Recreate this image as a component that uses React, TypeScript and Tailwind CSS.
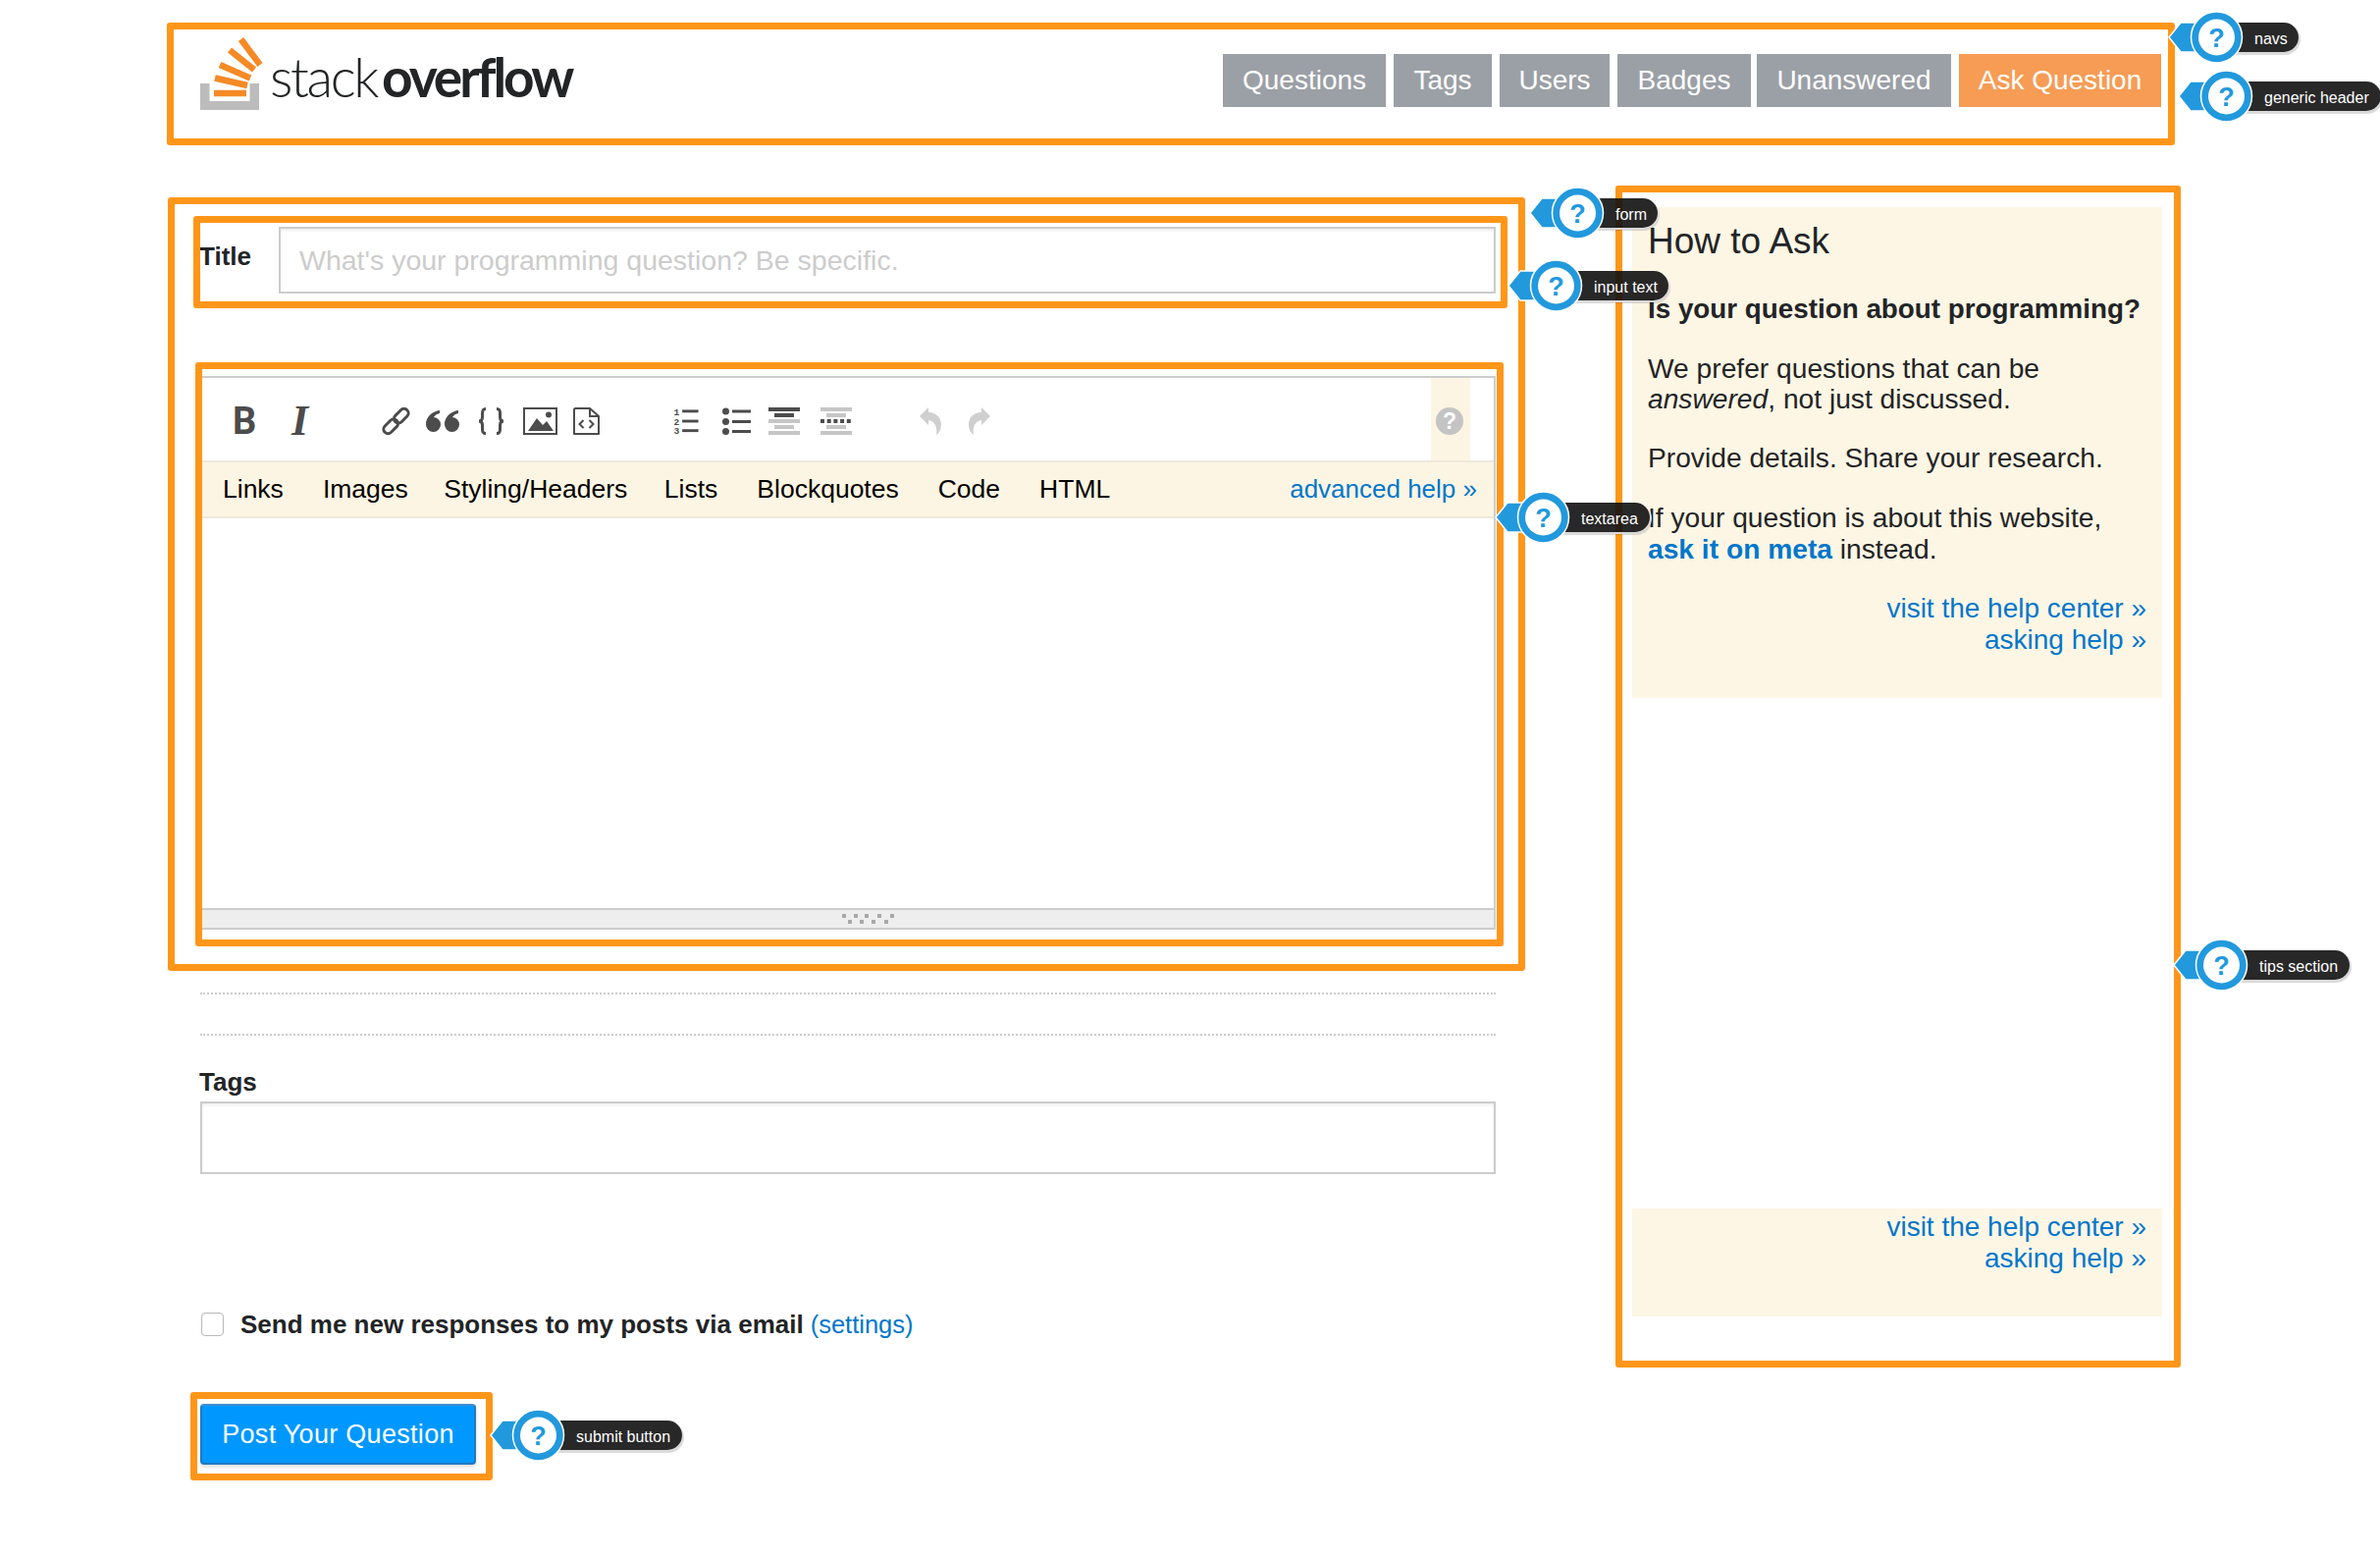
const NAV = [
  { label: "Questions", cls: "w-[166px] bg-[#9ba0a6]" },
  { label: "Tags", cls: "ml-[8px] w-[100px] bg-[#9ba0a6]" },
  { label: "Users", cls: "ml-[8px] w-[112px] bg-[#9ba0a6]" },
  { label: "Badges", cls: "ml-[8px] w-[136px] bg-[#9ba0a6]" },
  { label: "Unanswered", cls: "ml-[6px] w-[198px] bg-[#9ba0a6]" },
  { label: "Ask Question", cls: "ml-[8px] w-[206px] bg-[#f69c55]" },
];

const HELP_TABS = [
  { label: "Links", cls: "" },
  { label: "Images", cls: "ml-[40px]" },
  { label: "Styling/Headers", cls: "ml-[36.5px]" },
  { label: "Lists", cls: "ml-[37.5px]" },
  { label: "Blockquotes", cls: "ml-[40px]" },
  { label: "Code", cls: "ml-[40px]" },
  { label: "HTML", cls: "ml-[40px]" },
];

function Logo() {
  return (
    <div className="flex items-start">
      <svg width="64" height="74" viewBox="0 0 64 74" className="ml-px shrink-0">
        <path d="M0 47H9.5V65H50.5V47H60V74H0Z" fill="#bcbcbc" />
        <g stroke="#f58a26" strokeWidth="6.5">
          <path d="M14 57H47" />
          <path d="M15 41.5L48 49" />
          <path d="M20 28L51 41.5" />
          <path d="M30 13L55 33" />
          <path d="M41.5 2L61 28" />
        </g>
      </svg>
      <div className="ml-[7px] mt-[7px] flex text-[55px] leading-[66px] text-[#222426] font-['Lato',sans-serif]">
        <span className="font-light tracking-[-2.4px]">stack</span>
        <span className="ml-[5px] font-bold tracking-[-3px]">overflow</span>
      </div>
    </div>
  );
}

function Toolbar() {
  return (
    <div className="flex h-[84px] items-center pl-[31px] pt-[4px] text-[#4c4c4c]">
      <span className="w-[24px] text-[38px] leading-[28px] font-bold font-['Roboto',sans-serif]">B</span>
      <span className="ml-[36px] w-[30px] text-[44px] leading-[28px] font-bold italic font-['Liberation_Serif',serif]">I</span>

      {/* link */}
      <svg width="29" height="28" viewBox="0 0 29 28" className="ml-[62px]" fill="none" stroke="currentColor" strokeWidth="3">
        <g transform="rotate(-45 14.5 14)">
          <rect x="-1.5" y="9.5" width="17" height="9" rx="4.5" />
          <rect x="13.5" y="9.5" width="17" height="9" rx="4.5" />
        </g>
      </svg>
      {/* quote */}
      <svg width="34" height="22" viewBox="0 0 34 22" className="ml-[16px]" fill="currentColor">
        <circle cx="7.5" cy="14.5" r="7.5" />
        <path d="M0 14C0 7 6 1 14 0V3C9.5 4 7.5 7 7.5 9L1 13Z" />
        <circle cx="26.5" cy="14.5" r="7.5" />
        <path d="M19 14C19 7 25 1 33 0V3C28.5 4 26.5 7 26.5 9L20 13Z" />
      </svg>
      {/* braces */}
      <svg width="27" height="28" viewBox="0 0 27 28" className="ml-[19px]" fill="none" stroke="currentColor" strokeWidth="3">
        <path d="M8 1.5C5 1.5 4.5 3 4.5 6V10C4.5 12.5 3 14 1 14C3 14 4.5 15.5 4.5 18V22C4.5 25 5 26.5 8 26.5" />
        <path d="M19 1.5C22 1.5 22.5 3 22.5 6V10C22.5 12.5 24 14 26 14C24 14 22.5 15.5 22.5 18V22C22.5 25 22 26.5 19 26.5" />
      </svg>
      {/* image */}
      <svg width="35" height="28" viewBox="0 0 35 28" className="ml-[19px]">
        <rect x="1" y="1" width="33" height="26" fill="none" stroke="currentColor" strokeWidth="2" />
        <path d="M5 24L14 11L20 18L24 14L31 24Z" fill="currentColor" />
        <circle cx="26" cy="7.5" r="3" fill="currentColor" />
      </svg>
      {/* html */}
      <svg width="27" height="28" viewBox="0 0 27 28" className="ml-[16px]" fill="none" stroke="currentColor" strokeWidth="2">
        <path d="M2 1H17L26 9V27H1V2Z" strokeLinejoin="round" />
        <path d="M17 1V9H26" />
        <path d="M10.5 13L6.5 17L10.5 21M16.5 13L20.5 17L16.5 21" />
      </svg>

      {/* ordered list */}
      <svg width="26" height="28" viewBox="0 0 26 29" className="ml-[75px] overflow-visible" fill="currentColor">
        <text x="0" y="8.5" fontSize="10" fontWeight="700" fontFamily="Liberation Mono, monospace">1</text>
        <text x="0" y="18.5" fontSize="10" fontWeight="700" fontFamily="Liberation Mono, monospace">2</text>
        <text x="0" y="28" fontSize="10" fontWeight="700" fontFamily="Liberation Mono, monospace">3</text>
        <rect x="9" y="2.5" width="17" height="3" />
        <rect x="9" y="13" width="17" height="3" />
        <rect x="9" y="23" width="17" height="3" />
      </svg>
      {/* unordered list */}
      <svg width="29" height="28" viewBox="0 0 29 28" className="ml-[24px]" fill="currentColor">
        <circle cx="3.5" cy="4" r="3.5" />
        <circle cx="3.5" cy="14.5" r="3.5" />
        <circle cx="3.5" cy="24.5" r="3.5" />
        <rect x="10" y="2.5" width="19" height="3" />
        <rect x="10" y="13" width="19" height="3" />
        <rect x="10" y="23" width="19" height="3" />
      </svg>
      {/* heading */}
      <svg width="32" height="28" viewBox="0 0 32 28" className="ml-[18px]">
        <rect width="32" height="4" fill="#4c4c4c" />
        <rect x="6" y="6" width="20" height="4" fill="#4c4c4c" />
        <rect y="12" width="32" height="4" fill="#c6c6c6" />
        <rect x="6" y="18" width="20" height="4" fill="#c6c6c6" />
        <rect y="24" width="32" height="4" fill="#c6c6c6" />
      </svg>
      {/* horizontal rule */}
      <svg width="32" height="28" viewBox="0 0 32 28" className="ml-[21px]">
        <rect width="32" height="4" fill="#c6c6c6" />
        <rect x="6" y="6" width="20" height="4" fill="#c6c6c6" />
        <path d="M0 14H32" stroke="#4c4c4c" strokeWidth="4" strokeDasharray="4 2.7" />
        <rect x="6" y="18" width="20" height="4" fill="#c6c6c6" />
        <rect y="24" width="32" height="4" fill="#c6c6c6" />
      </svg>

      {/* undo / redo */}
      <svg width="22" height="28" viewBox="0 0 22 28" className="ml-[69px]" fill="#cfcfcf">
        <path d="M0 9L9 0V18Z" />
        <path d="M9 5C17 5 22 11 22 17C22 22 20 26 17 28C18 23 17 14 9 13Z" />
      </svg>
      <svg width="22" height="28" viewBox="0 0 22 28" className="ml-[28px]" fill="#cfcfcf">
        <path d="M22 9L13 0V18Z" />
        <path d="M13 5C5 5 0 11 0 17C0 22 2 26 5 28C4 23 5 14 13 13Z" />
      </svg>

      {/* help */}
      <div className="ml-auto mr-[24px] -mt-[4px] flex h-[84px] w-[40px] items-center justify-center bg-[#fdf5e3] pt-[4px]">
        <svg width="28" height="28" viewBox="0 0 28 28" className="-ml-[3px]">
          <circle cx="14" cy="14" r="14" fill="#c4c4c4" />
          <text x="14" y="22" textAnchor="middle" fontSize="23" fontWeight="700" fill="#fff" fontFamily="Liberation Sans, sans-serif">?</text>
        </svg>
      </div>
    </div>
  );
}

function Editor() {
  return (
    <div className="mt-[84px] ml-px flex w-[1320px] flex-col border-x-2 border-t-2 border-[#ccc]">
      <Toolbar />
      <div className="flex h-[59px] items-center border-y-2 border-[#efe8dc] bg-[#fdf5e3] pl-[21px] pr-[17px] text-[26.5px] text-black">
        {HELP_TABS.map((t) => (
          <span key={t.label} className={t.cls}>
            {t.label}
          </span>
        ))}
        <a className="ml-auto text-[26px] text-[#0077cc]">advanced help »</a>
      </div>
      <div className="h-[397px]" />
      <div className="flex h-[22px] items-center justify-center border-y-2 border-[#ccc] bg-[#eee]">
        <svg width="54" height="10" viewBox="0 0 54 10" className="ml-[42px]" fill="#a9a9a9">
          <rect x="0" y="0" width="4" height="4" />
          <rect x="12" y="0" width="4" height="4" />
          <rect x="23" y="0" width="4" height="4" />
          <rect x="36" y="0" width="4" height="4" />
          <rect x="49" y="0" width="4" height="4" />
          <rect x="6" y="6" width="4" height="4" />
          <rect x="18" y="6" width="4" height="4" />
          <rect x="30" y="6" width="4" height="4" />
          <rect x="43" y="6" width="4" height="4" />
        </svg>
      </div>
    </div>
  );
}

function Form() {
  return (
    <div className="w-[1321px] pt-[20px] text-[#222426]">
      <div className="flex items-start">
        <label className="mt-[14px] w-[81px] text-[26px] font-bold leading-[32px]">Title</label>
        <div className="flex h-[68px] flex-1 items-center border-2 border-[#ccc] pl-[19px] text-[28.5px] text-[#ccc] shadow-[inset_0_2px_3px_rgba(0,0,0,0.07)]">
          What's your programming question? Be specific.
        </div>
      </div>

      <Editor />

      <div className="mt-[64px] ml-px border-t-2 border-dotted border-[#ccc]" />
      <div className="mt-[40px] ml-px border-t-2 border-dotted border-[#ccc]" />

      <label className="mt-[31px] block text-[26px] font-bold leading-[32px]">Tags</label>
      <div className="mt-[4px] ml-px h-[74px] border-2 border-[#ccc] shadow-[inset_0_2px_3px_rgba(0,0,0,0.07)]" />

      <div className="mt-[137px] ml-[2px] flex items-center">
        <span className="h-[24px] w-[23px] rounded-[4px] border border-[#bbb] bg-white shadow-[inset_0_1px_2px_rgba(0,0,0,0.08)]" />
        <span className="ml-[17px] text-[26px] leading-[32px] font-bold">Send me new responses to my posts via email</span>
        <a className="ml-[7px] text-[25.5px] leading-[32px] text-[#0077cc]">(settings)</a>
      </div>

      <button className="mt-[65px] ml-px flex h-[62px] w-[281px] items-center justify-center rounded-[4px] border-2 border-[#1f78c0] border-t-[#3a8fd4] bg-[#0098ff] text-[27px] tracking-[0.3px] text-white shadow-[0_2px_4px_rgba(0,0,0,0.15)]">
        Post Your Question
      </button>
    </div>
  );
}

function HelpLinks() {
  return (
    <div className="text-right text-[28px] text-[#0077cc]">
      <a className="block">visit the help center »</a>
      <a className="block">asking help »</a>
    </div>
  );
}

function Tips() {
  return (
    <aside className="w-[540px] text-[28.2px] leading-[31.5px] text-[#222426]">
      <div className="h-[500px] bg-[#fef6e4] pl-[16px] pr-[16px] pt-[13px]">
        <h2 className="text-[37px] leading-[44px]">How to Ask</h2>
        <p className="mt-[31px] text-[27.8px] font-bold">Is your question about programming?</p>
        <p className="mt-[29px]">
          We prefer questions that can be <em>answered</em>, not just discussed.
        </p>
        <p className="mt-[28px]">Provide details. Share your research.</p>
        <p className="mt-[30px]">
          If your question is about this website, <br />
          <a className="font-bold text-[#0077cc]">ask it on meta</a> instead.
        </p>
        <div className="mt-[29px]">
          <HelpLinks />
        </div>
      </div>
      <div className="mt-[520px] h-[110px] bg-[#fef6e4] pr-[16px] pt-[3px]">
        <HelpLinks />
      </div>
    </aside>
  );
}

function Outline({ cls }: { cls: string }) {
  return <div className={`absolute rounded-[3px] border-[7px] border-[#ff9619] ${cls}`} />;
}

function Marker({ label, pos, pill }: { label: string; pos: string; pill: string }) {
  return (
    <div className={`absolute h-[60px] w-[80px] ${pos}`}>
      <div className={`absolute left-[49px] top-[15px] flex h-[30px] items-center whitespace-nowrap rounded-r-[15px] bg-[#111]/90 pl-[39px] pt-[3px] text-[16px] text-white shadow-[1px_2px_1px_1px_rgba(0,0,0,0.15),1px_1px_0_1px_#fff] ${pill}`}>
        {label}
      </div>
      <svg width="80" height="60" viewBox="0 0 80 60" className="absolute left-0 top-0 overflow-visible">
        <path d="M1 30L13 15H30V45H13Z" fill="#2299dd" stroke="#fff" strokeWidth="1.5" strokeLinejoin="round" />
        <circle cx="49.5" cy="30" r="26" fill="#2299dd" stroke="#fff" strokeWidth="1.5" />
        <circle cx="49.5" cy="30" r="18.5" fill="#fff" />
        <text x="49.5" y="39.5" textAnchor="middle" fontSize="27" fontWeight="700" fill="#2299dd" fontFamily="Liberation Sans, sans-serif">?</text>
      </svg>
    </div>
  );
}

export default function App() {
  return (
    <div className="relative min-h-[1585px] w-[2425px] overflow-hidden bg-white font-['Liberation_Sans',Arial,sans-serif]">
      <div className="ml-[203px] w-[2000px]">
        <header className="flex h-[148px] items-start justify-between pt-[38px]">
          <Logo />
          <nav className="mr-px mt-[17px] flex">
            {NAV.map((n) => (
              <a key={n.label} className={`flex h-[54px] items-center justify-center text-[28px] text-white ${n.cls}`}>
                {n.label}
              </a>
            ))}
          </nav>
        </header>
        <main className="mt-[63px] flex justify-between">
          <Form />
          <Tips />
        </main>
      </div>

      {/* orange outlines and help markers sit over the page */}
      <Outline cls="left-[170px] top-[23px] h-[125px] w-[2046px]" />
      <Outline cls="left-[171px] top-[201px] h-[788px] w-[1383px]" />
      <Outline cls="left-[197px] top-[220px] h-[94px] w-[1339px]" />
      <Outline cls="left-[199px] top-[369px] h-[595px] w-[1333px]" />
      <Outline cls="left-[1646px] top-[189px] h-[1204px] w-[576px]" />
      <Outline cls="left-[194px] top-[1418px] h-[90px] w-[308px]" />

      <Marker label="navs" pos="left-[2209px] top-[8px]" pill="pr-[11px]" />
      <Marker label="generic header" pos="left-[2219px] top-[68px]" pill="pr-[12px]" />
      <Marker label="form" pos="left-[1558px] top-[187px]" pill="pr-[11px]" />
      <Marker label="input text" pos="left-[1536px] top-[261px]" pill="pr-[11px]" />
      <Marker label="textarea" pos="left-[1523px] top-[497px]" pill="pr-[12px]" />
      <Marker label="submit button" pos="left-[499px] top-[1432px]" pill="pr-[12px]" />
      <Marker label="tips section" pos="left-[2214px] top-[953px]" pill="pr-[12px]" />
    </div>
  );
}
